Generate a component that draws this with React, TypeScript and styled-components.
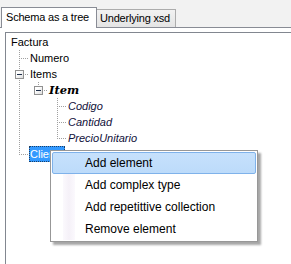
import styled, { createGlobalStyle, css } from "styled-components";

const GlobalStyle = createGlobalStyle`
  html, body {
    margin: 0;
    height: 264px;
    overflow: hidden;
    background: #f2f2f2;
    font-family: "Liberation Sans", Arial, sans-serif;
  }
  #root {
    height: 100%;
  }
`;

type Guide = "none" | "pipe" | "tee" | "elbow";
type LabelKind = "normal" | "complex" | "child";

interface Node {
  label: string;
  guides: Guide[];
  kind?: LabelKind;
  expander?: boolean;
  selected?: boolean;
}

const nodes: Node[] = [
  { label: "Factura", guides: [] },
  { label: "Numero", guides: ["tee"] },
  { label: "Items", guides: ["tee"], expander: true },
  { label: "Item", guides: ["pipe", "elbow"], kind: "complex", expander: true },
  { label: "Codigo", guides: ["pipe", "none", "tee"], kind: "child" },
  { label: "Cantidad", guides: ["pipe", "none", "tee"], kind: "child" },
  { label: "PrecioUnitario", guides: ["pipe", "none", "elbow"], kind: "child" },
  { label: "Cliente", guides: ["elbow"], selected: true },
];

const menuItems = ["Add element", "Add complex type", "Add repetittive collection", "Remove element"];

const Window = styled.div`
  position: relative;
  display: flex;
  flex-direction: column;
  height: 100%;
`;

const TabStrip = styled.div`
  display: flex;
  align-items: flex-end;
  height: 27px;
  padding-left: 1px;
  border-bottom: 1px solid #898c95;
`;

const Tab = styled.div<{ $active?: boolean }>`
  box-sizing: border-box;
  font-size: 11px;
  line-height: 13px;
  letter-spacing: -0.2px;
  color: #000;
  white-space: nowrap;
  ${({ $active }) =>
    $active
      ? css`
          width: 96px;
          height: 21px;
          margin-bottom: -1px;
          padding: 3px 0 0 4px;
          background: #fff;
          border: 1px solid #898c95;
          border-bottom: none;
          position: relative;
          z-index: 1;
        `
      : css`
          width: 79px;
          height: 18px;
          padding: 2px 0 0 3px;
          background: linear-gradient(#f2f2f2, #e4e4e4);
          border: 1px solid #acacac;
          border-left: none;
          border-bottom: none;
        `}
`;

const TabPage = styled.div`
  flex: 1;
  background: #fff;
  padding: 4px 0 0 5px;
  display: flex;
`;

const TreeView = styled.div`
  flex: 1;
  background: #fff;
  border-top: 1px solid #828790;
  border-left: 1px solid #828790;
  padding: 1px 0 0 4px;
`;

const Row = styled.div`
  display: flex;
  height: 16px;
`;

const dotsV = "repeating-linear-gradient(to bottom, #a0a0a0 0 1px, transparent 1px 2px)";
const dotsH = "repeating-linear-gradient(to right, #a0a0a0 0 1px, transparent 1px 2px)";

const GuideCell = styled.div<{ $type: Guide }>`
  position: relative;
  flex: 0 0 19px;
  height: 16px;
  &::before {
    content: "";
    position: absolute;
    left: 9px;
    top: 0;
    width: 1px;
    height: ${({ $type }) => ($type === "elbow" ? "8px" : "16px")};
    background: ${dotsV};
    display: ${({ $type }) => ($type === "none" ? "none" : "block")};
  }
  &::after {
    content: "";
    position: absolute;
    left: 9px;
    top: 8px;
    width: 10px;
    height: 1px;
    background: ${dotsH};
    display: ${({ $type }) => ($type === "tee" || $type === "elbow" ? "block" : "none")};
  }
`;

const Expander = styled.span`
  position: absolute;
  left: 5px;
  top: 4px;
  width: 9px;
  height: 9px;
  box-sizing: border-box;
  border: 1px solid #919191;
  background: linear-gradient(135deg, #ffffff 30%, #dcdcdc);
  z-index: 1;
  &::after {
    content: "";
    position: absolute;
    left: 1px;
    top: 3px;
    width: 5px;
    height: 1px;
    background: #1e2f4a;
  }
`;

const Label = styled.span<{ $kind: LabelKind; $selected?: boolean }>`
  margin-left: 0;
  padding: 0 1px;
  height: 16px;
  line-height: 16px;
  font-size: 11px;
  white-space: nowrap;
  color: #000;
  ${({ $kind }) =>
    $kind === "complex" &&
    css`
      font-family: "DejaVu Serif", "Liberation Serif", serif;
      font-weight: bold;
      font-style: italic;
      font-size: 11.5px;
    `}
  ${({ $kind }) =>
    $kind === "child" &&
    css`
      font-style: italic;
      color: #10103a;
    `}
  ${({ $selected }) =>
    $selected &&
    css`
      background: #3399ff;
      color: #fff;
      outline: 1px dotted #1c3f66;
      outline-offset: -1px;
    `}
`;

const ContextMenu = styled.div`
  position: absolute;
  left: 50px;
  top: 150px;
  width: 208px;
  box-sizing: border-box;
  padding: 1px 0;
  background: #fff;
  border: 1px solid #979797;
  box-shadow: 3px 3px 2px rgba(0, 0, 0, 0.35);
  z-index: 5;
  &::before {
    content: "";
    position: absolute;
    left: 12px;
    top: 1px;
    bottom: 1px;
    width: 12px;
    background: linear-gradient(to right, #fbf9fd, #f5f1f8, #fbf9fd);
  }
`;

const MenuItem = styled.div<{ $hot?: boolean }>`
  position: relative;
  margin: 0 1px;
  height: 22px;
  box-sizing: border-box;
  padding-left: 32px;
  border: 1px solid transparent;
  border-radius: 2px;
  font-size: 12px;
  line-height: 20px;
  color: #000;
  white-space: nowrap;
  ${({ $hot }) =>
    $hot &&
    css`
      background: linear-gradient(#c6e1fc, #bcdbfa);
      border-color: #7fb2ea;
    `}
`;

export default function App() {
  return (
    <>
      <GlobalStyle />
      <Window>
        <TabStrip>
          <Tab $active>Schema as a tree</Tab>
          <Tab>Underlying xsd</Tab>
        </TabStrip>
        <TabPage>
          <TreeView>
            {nodes.map((node) => (
              <Row key={node.label}>
                {node.guides.map((g, i) => (
                  <GuideCell key={i} $type={g}>
                    {node.expander && i === node.guides.length - 1 && <Expander />}
                  </GuideCell>
                ))}
                <Label $kind={node.kind ?? "normal"} $selected={node.selected}>
                  {node.label}
                </Label>
              </Row>
            ))}
          </TreeView>
        </TabPage>
        <ContextMenu>
          {menuItems.map((item, i) => (
            <MenuItem key={item} $hot={i === 0}>
              {item}
            </MenuItem>
          ))}
        </ContextMenu>
      </Window>
    </>
  );
}
